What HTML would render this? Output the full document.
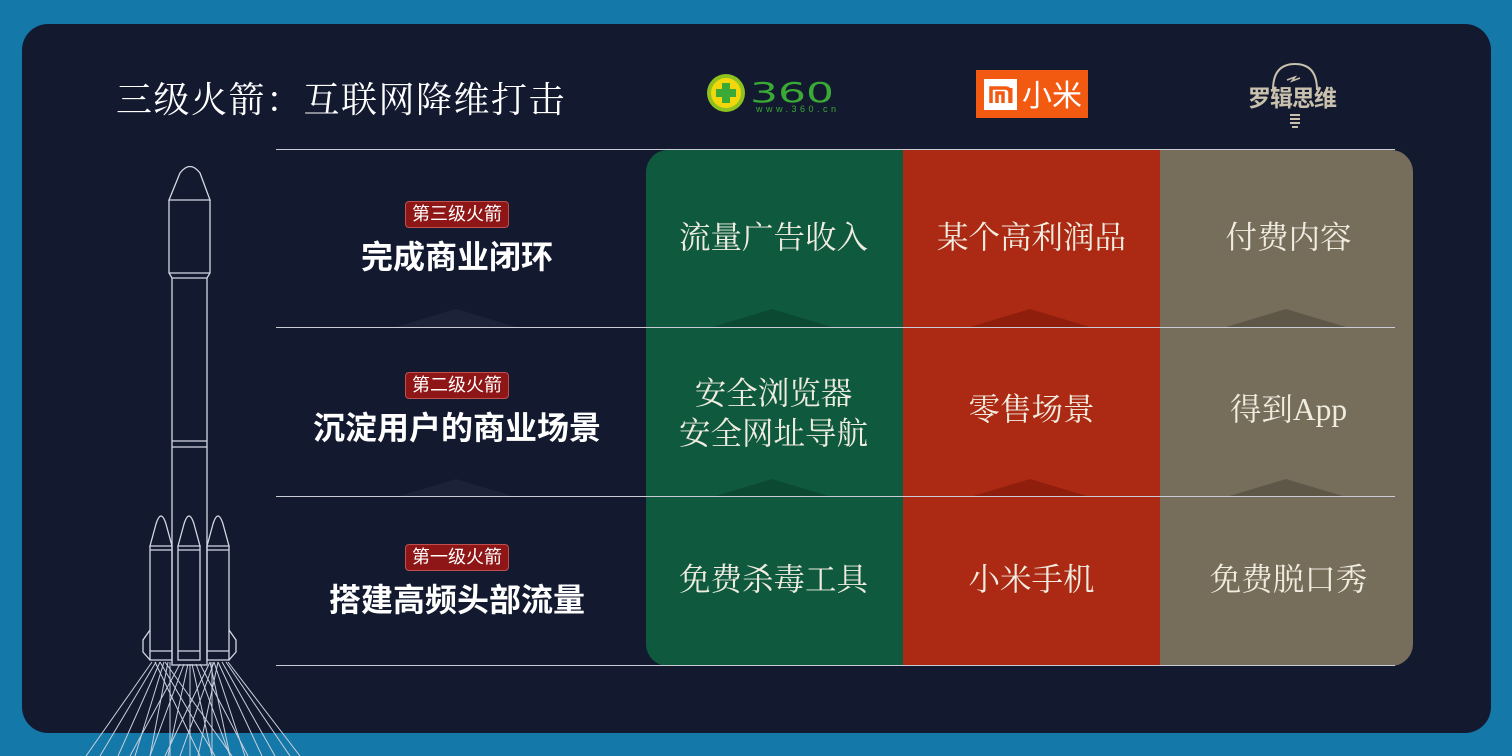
<!DOCTYPE html>
<html><head><meta charset="utf-8"><style>
*{margin:0;padding:0;box-sizing:border-box}
body{width:1512px;height:756px;overflow:hidden;background:#1478a8;position:relative;font-family:"Liberation Sans","Noto Sans CJK SC",sans-serif}
.card{position:absolute;left:22px;top:24px;width:1469px;height:709px;background:#131a30;border-radius:26px;overflow:hidden}
.abs{position:absolute}
.title{left:116px;top:76px;font-family:"Liberation Serif","Noto Serif CJK SC",serif;font-size:36px;color:#fff;letter-spacing:1.5px;line-height:48px}
.col{position:absolute;top:150px;height:516px;width:257px}
.cell{position:absolute;width:257px;text-align:center;font-family:"Liberation Serif","Noto Serif CJK SC",serif;font-size:31.5px;color:#f0ece0;line-height:40px}
.hl{position:absolute;left:276px;width:1119px;height:1px;background:#c9ccd4}
.tag{position:absolute;background:#8e1616;border:1px solid #c0504d;border-radius:4px;color:#fff;font-size:18px;padding:0 6px;height:27px;line-height:25px}
.lab{position:absolute;width:300px;text-align:center;font-weight:bold;color:#fff;font-size:32px;line-height:40px}
.tri{position:absolute;width:0;height:0;border-left:60px solid transparent;border-right:60px solid transparent;border-bottom:18px solid rgba(0,0,0,.18)}
</style></head><body>
<div class="card"></div>
<div class="abs title">三级火箭：互联网降维打击</div>

<svg class="abs" style="left:706px;top:72px" width="132" height="44">
<circle cx="20" cy="21" r="19" fill="#8dc21f"/><circle cx="20" cy="21" r="15" fill="#f4d60c"/>
<rect x="16" y="11" width="8" height="20" fill="#3aa935"/><rect x="10" y="17" width="20" height="8" fill="#3aa935"/>
<text x="44" y="30" font-family="DejaVu Sans" font-size="28" fill="#3aa935" textLength="84" lengthAdjust="spacingAndGlyphs">360</text>
<text x="50" y="40" font-family="Liberation Sans" font-size="9" fill="#3aa935" textLength="80">www.360.cn</text>
</svg>
<div class="abs" style="left:976px;top:70px;width:112px;height:48px;background:#f25a12"></div>
<div class="abs" style="left:984px;top:79px;width:33px;height:31px;background:#fff"></div>
<svg class="abs" style="left:984px;top:79px" width="33" height="31"><path d="M7 24V9h14q5 0 5 5v10M13 24V14h6v10" stroke="#f25a12" stroke-width="3.5" fill="none"/><rect x="25" y="9" width="3.5" height="15" fill="#f25a12"/></svg>
<div class="abs" style="left:1022px;top:76px;color:#fff;font-size:30px;font-family:'Noto Sans CJK SC',sans-serif;line-height:34px">小米</div>
<svg class="abs" style="left:1245px;top:58px" width="100" height="76">
<path d="M28 32 Q28 6 50 6 Q72 6 72 32" stroke="#c9c1ad" stroke-width="2" fill="none"/>
<path d="M42 22l8-3-3 4 8-3" stroke="#c9c1ad" stroke-width="1.5" fill="none"/>
<path d="M45 57h10M45 61h10M45 65h10M47 69h6" stroke="#c9c1ad" stroke-width="2"/>
</svg>
<div class="abs" style="left:1248px;top:84px;color:#c9c1ad;font-size:23px;font-weight:bold;line-height:28px;letter-spacing:-1px">罗辑思维</div>

<div class="col" style="left:646px;background:#0f5a3e;border-radius:22px 0 0 22px"></div>
<div class="col" style="left:903px;background:#ac2a13"></div>
<div class="col" style="left:1160px;width:253px;background:#766d5b;border-radius:0 22px 22px 0"></div>

<div class="tri" style="left:712px;top:309px"></div><div class="tri" style="left:970px;top:309px;border-bottom-color:rgba(90,10,0,.35)"></div><div class="tri" style="left:1226px;top:309px;border-bottom-color:rgba(0,0,0,.2)"></div>
<div class="tri" style="left:712px;top:479px"></div><div class="tri" style="left:970px;top:479px;border-bottom-color:rgba(90,10,0,.35)"></div><div class="tri" style="left:1226px;top:479px;border-bottom-color:rgba(0,0,0,.2)"></div>
<div class="tri" style="left:396px;top:309px;border-bottom-color:rgba(255,255,255,.04)"></div><div class="tri" style="left:396px;top:479px;border-bottom-color:rgba(255,255,255,.04)"></div>

<div class="hl" style="top:149px"></div>
<div class="hl" style="top:327px"></div>
<div class="hl" style="top:496px"></div>
<div class="hl" style="top:665px"></div>

<div class="cell" style="left:645px;top:218px">流量广告收入</div>
<div class="cell" style="left:903px;top:218px">某个高利润品</div>
<div class="cell" style="left:1160px;top:218px">付费内容</div>
<div class="cell" style="left:645px;top:374px">安全浏览器<br>安全网址导航</div>
<div class="cell" style="left:903px;top:390px">零售场景</div>
<div class="cell" style="left:1160px;top:390px">得到App</div>
<div class="cell" style="left:645px;top:560px">免费杀毒工具</div>
<div class="cell" style="left:903px;top:560px">小米手机</div>
<div class="cell" style="left:1160px;top:560px">免费脱口秀</div>

<div class="tag" style="left:405px;top:201px">第三级火箭</div>
<div class="lab" style="left:307px;top:237px">完成商业闭环</div>
<div class="tag" style="left:405px;top:372px">第二级火箭</div>
<div class="lab" style="left:307px;top:408px">沉淀用户的商业场景</div>
<div class="tag" style="left:405px;top:544px">第一级火箭</div>
<div class="lab" style="left:307px;top:580px">搭建高频头部流量</div>

<svg class="abs" style="left:0;top:0" width="320" height="756" fill="none" stroke="#d4d8e2" stroke-width="1.3">
<path d="M169 200 L180 173 Q190 160 200 173 L210 200 Z"/>
<path d="M169 200 V273 L172 278 H207 L210 273 V200"/>
<path d="M169 273 H210"/>
<path d="M172 278 V665 H207 V278"/>
<path d="M172 441 H207 M172 447 H207"/>
<path d="M150 546 L156 524 Q161 508 166 524 L172 546 Z"/><path d="M150 546 V660 H172 V546 M150 550 H172 M150 651 H172"/>
<path d="M178 546 L184 524 Q189 508 194 524 L200 546 Z"/><path d="M178 546 V660 H200 V546 M178 550 H200 M178 651 H200"/>
<path d="M207 546 L213 524 Q218 508 223 524 L229 546 Z"/><path d="M207 546 V660 H229 V546 M207 550 H229 M207 651 H229"/>
<path d="M150 630 L143 640 V652 L150 660 M229 630 L236 640 V652 L229 660"/>
<g stroke-width="1" stroke="#c8d0dc">
<path d="M152 662 L86 756 M156 662 L100 756 M160 662 L118 756 M164 662 L135 756 M168 662 L150 756 M170 662 L170 756"/>
<path d="M155 662 L200 756 M160 662 L215 756 M165 662 L232 756"/>
<path d="M180 664 L130 756 M184 664 L150 756 M188 664 L168 756 M190 664 L190 756 M192 664 L212 756 M196 664 L230 756 M200 664 L248 756"/>
<path d="M210 662 L165 756 M214 662 L180 756 M218 662 L198 756"/>
<path d="M210 662 L230 756 M214 662 L245 756 M218 662 L262 756 M222 662 L275 756 M226 662 L290 756 M228 662 L300 756 M212 662 L212 756"/>
</g>
</svg>
</body></html>
